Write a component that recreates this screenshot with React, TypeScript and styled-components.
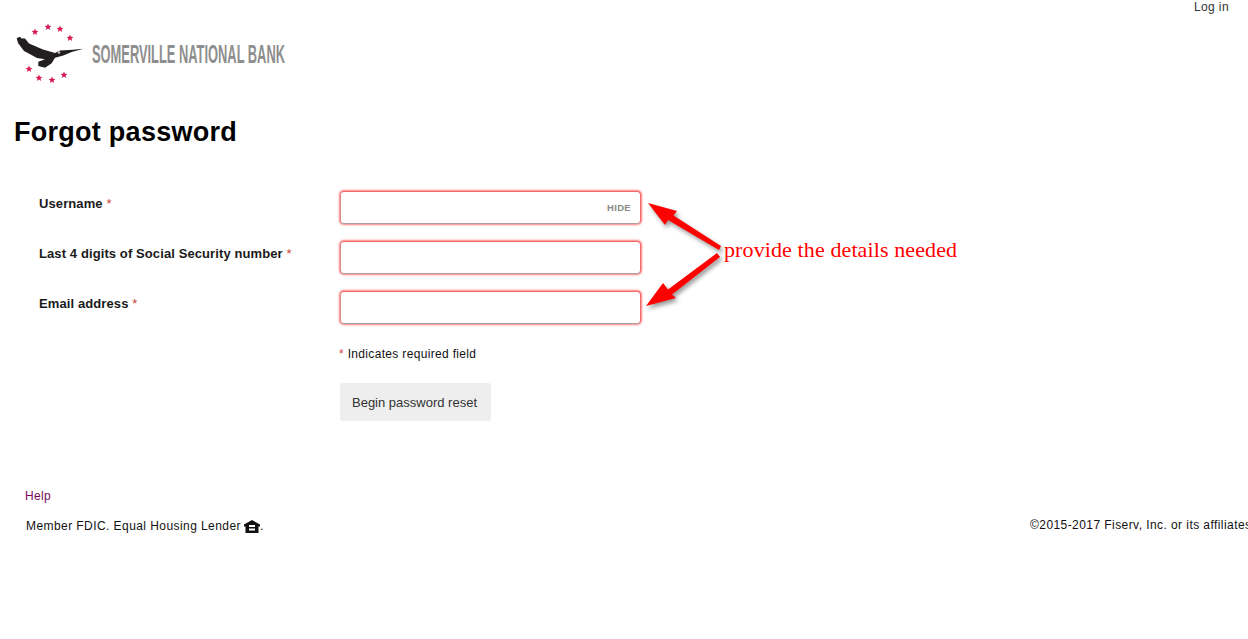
import React from "react";
import styled, { createGlobalStyle } from "styled-components";

const Global = createGlobalStyle`
  html, body { margin: 0; padding: 0; background: #fff; overflow: hidden; }
  body { font-family: "Liberation Sans", Arial, sans-serif; color: #111; }
`;

const Page = styled.div`
  position: relative;
  width: 1248px;
  height: 639px;
  overflow: hidden;
`;

const TopBar = styled.div`
  display: flex;
  justify-content: flex-end;
  height: 14px;
  padding-right: 19px;
`;

const TopLink = styled.a`
  font-size: 12px;
  line-height: 14px;
  letter-spacing: 0.4px;
  color: #333;
`;

const LogoRow = styled.div`
  height: 70px;
`;

const LogoSvg = styled.svg`
  display: block;
`;

const Title = styled.h1`
  margin: 24px 0 0 14px;
  font-size: 27px;
  line-height: 48px;
  font-weight: 700;
  letter-spacing: 0.27px;
  color: #000;
`;

const Form = styled.form`
  display: flex;
  flex-direction: column;
  gap: 17px;
  margin: 35px 0 0 39px;
`;

const Row = styled.div`
  display: grid;
  grid-template-columns: 301px 301px;
  align-items: start;
`;

const Label = styled.label`
  font-size: 13px;
  line-height: 15px;
  font-weight: 700;
  letter-spacing: 0.1px;
  color: #1a1a1a;
  padding-top: 5px;
`;

const Star = styled.span`
  font-weight: 400;
  color: #c8453a;
`;

const FieldBox = styled.div`
  position: relative;
  width: 301px;
  height: 33px;
`;

const Input = styled.input`
  display: block;
  box-sizing: border-box;
  width: 301px;
  height: 33px;
  border: 1px solid #f06a6a;
  border-bottom-color: #ad9f9f;
  border-left-color: #d98a8a;
  border-radius: 4px;
  background: #fff;
  box-shadow: 0 0 2px 1px rgba(255, 70, 70, 0.7);
  outline: none;
`;

const HideTag = styled.span`
  position: absolute;
  right: 10px;
  top: 11px;
  font-size: 9.5px;
  line-height: 11px;
  font-weight: 700;
  letter-spacing: 0.3px;
  color: #8a8a85;
`;

const Actions = styled.div`
  margin-left: 39px;
`;

const RequiredNote = styled.p`
  margin: 23px 0 0 300px;
  font-size: 12px;
  line-height: 14px;
  letter-spacing: 0.33px;
  color: #111;
`;

const Submit = styled.button`
  display: block;
  width: 151px;
  height: 38px;
  margin: 22px 0 0 301px;
  padding: 0 2px 0 0;
  border: 0;
  border-radius: 3px;
  background: #eeeeee;
  font-family: inherit;
  font-size: 13px;
  color: #333;
`;

const Footer = styled.footer`
  margin-top: 68px;
`;

const HelpLink = styled.a`
  display: block;
  margin-left: 25px;
  font-size: 12px;
  line-height: 14px;
  letter-spacing: 0.3px;
  color: #7a0a5a;
`;

const FooterRow = styled.div`
  display: grid;
  grid-template-columns: 1030px 218px;
  margin-top: 15px;
  font-size: 12px;
  line-height: 14px;
  letter-spacing: 0.43px;
  color: #111;
  white-space: nowrap;
`;

const Member = styled.div`
  display: flex;
  align-items: center;
  padding-left: 26px;
`;

const HouseSvg = styled.svg`
  margin: 2px 0 0 3px;
`;

const Arrows = styled.svg`
  position: absolute;
  left: 630px;
  top: 190px;
  filter: drop-shadow(2px 3px 2px rgba(0, 0, 0, 0.4));
`;

const Note = styled.div`
  position: absolute;
  left: 724px;
  top: 237px;
  font-family: "Liberation Serif", "Times New Roman", serif;
  font-size: 22px;
  line-height: 25px;
  letter-spacing: 0.11px;
  color: #f00;
  white-space: nowrap;
`;

const starPoints = (cx: number, cy: number, r: number) =>
  Array.from({ length: 10 }, (_, i) => {
    const a = -Math.PI / 2 + (i * Math.PI) / 5;
    const rad = i % 2 ? r * 0.45 : r;
    return `${(cx + rad * Math.cos(a)).toFixed(2)},${(cy + rad * Math.sin(a)).toFixed(2)}`;
  }).join(" ");

const stars: [number, number][] = [
  [35, 32], [48, 27], [60, 29], [70, 38],
  [29, 69], [39, 78], [52, 80], [64, 75],
];

const Logo = () => (
  <LogoSvg width="520" height="70" viewBox="0 14 520 70" role="img" aria-label="Somerville National Bank">
    {stars.map(([x, y]) => (
      <polygon key={`${x}-${y}`} points={starPoints(x, y, 3.6)} fill="#d8174f" />
    ))}
    <path
      d="M16.7 38.3 L20 36.7 L21.5 38.5 L25 38.5 L29 43.5 L43 49.5 L55 53 L60 50.5 L73 49.8 L83.5 48.8 L71.7 52 L63.3 55.5 L55 57.8 L51.7 63.3 L45 67.7 L38.3 66 L38.3 61.7 L45 59.3 L37 58 L24 51 L18 43 Z"
      fill="#231f20"
    />
    <circle cx="59" cy="52.5" r="1.2" fill="#ccc" />
    <text
      x="92"
      y="63"
      fontFamily="'Liberation Sans', Arial, sans-serif"
      fontSize="25"
      fontWeight="700"
      fill="#8e8e8e"
      textLength="193"
      lengthAdjust="spacingAndGlyphs"
    >
      SOMERVILLE NATIONAL BANK
    </text>
  </LogoSvg>
);

const House = () => (
  <HouseSvg width="16" height="13" viewBox="0 0 16 13" aria-hidden="true">
    <path
      fillRule="evenodd"
      d="M8 0 L16 4.5 V6.5 H14.5 V13 H1.5 V6.5 H0 V4.5 Z M5 5 V7 H11 V5 Z M5 8.5 V10.5 H11 V8.5 Z"
      fill="#111"
    />
  </HouseSvg>
);

const fields = [
  { label: "Username", id: "user", hide: true },
  { label: "Last 4 digits of Social Security number", id: "ssn", hide: false },
  { label: "Email address", id: "email", hide: false },
];

export default function App() {
  return (
    <Page>
      <Global />
      <TopBar>
        <TopLink>Log in</TopLink>
      </TopBar>
      <LogoRow>
        <Logo />
      </LogoRow>
      <Title>Forgot password</Title>
      <Form>
        {fields.map((f) => (
          <Row key={f.id}>
            <Label htmlFor={f.id}>
              {f.label} <Star>*</Star>
            </Label>
            <FieldBox>
              <Input id={f.id} />
              {f.hide && <HideTag>HIDE</HideTag>}
            </FieldBox>
          </Row>
        ))}
      </Form>
      <Actions>
        <RequiredNote>
          <Star>*</Star> Indicates required field
        </RequiredNote>
        <Submit type="button">Begin password reset</Submit>
      </Actions>
      <Footer>
        <HelpLink>Help</HelpLink>
        <FooterRow>
          <Member>
            Member FDIC. Equal Housing Lender <House />.
          </Member>
          <div>©2015-2017 Fiserv, Inc. or its affiliates</div>
        </FooterRow>
      </Footer>
      <Arrows width="110" height="130" viewBox="0 0 110 130" aria-hidden="true">
        <path d="M18 13 L47 21 L43.5 25.5 L91 56 L89 60 L38 30 L35 35 Z" fill="#f00" />
        <path d="M16 116 L33 93 L38 99.5 L87 63 L90 67 L42 104.5 L46 108 Z" fill="#f00" />
      </Arrows>
      <Note>provide the details needed</Note>
    </Page>
  );
}
